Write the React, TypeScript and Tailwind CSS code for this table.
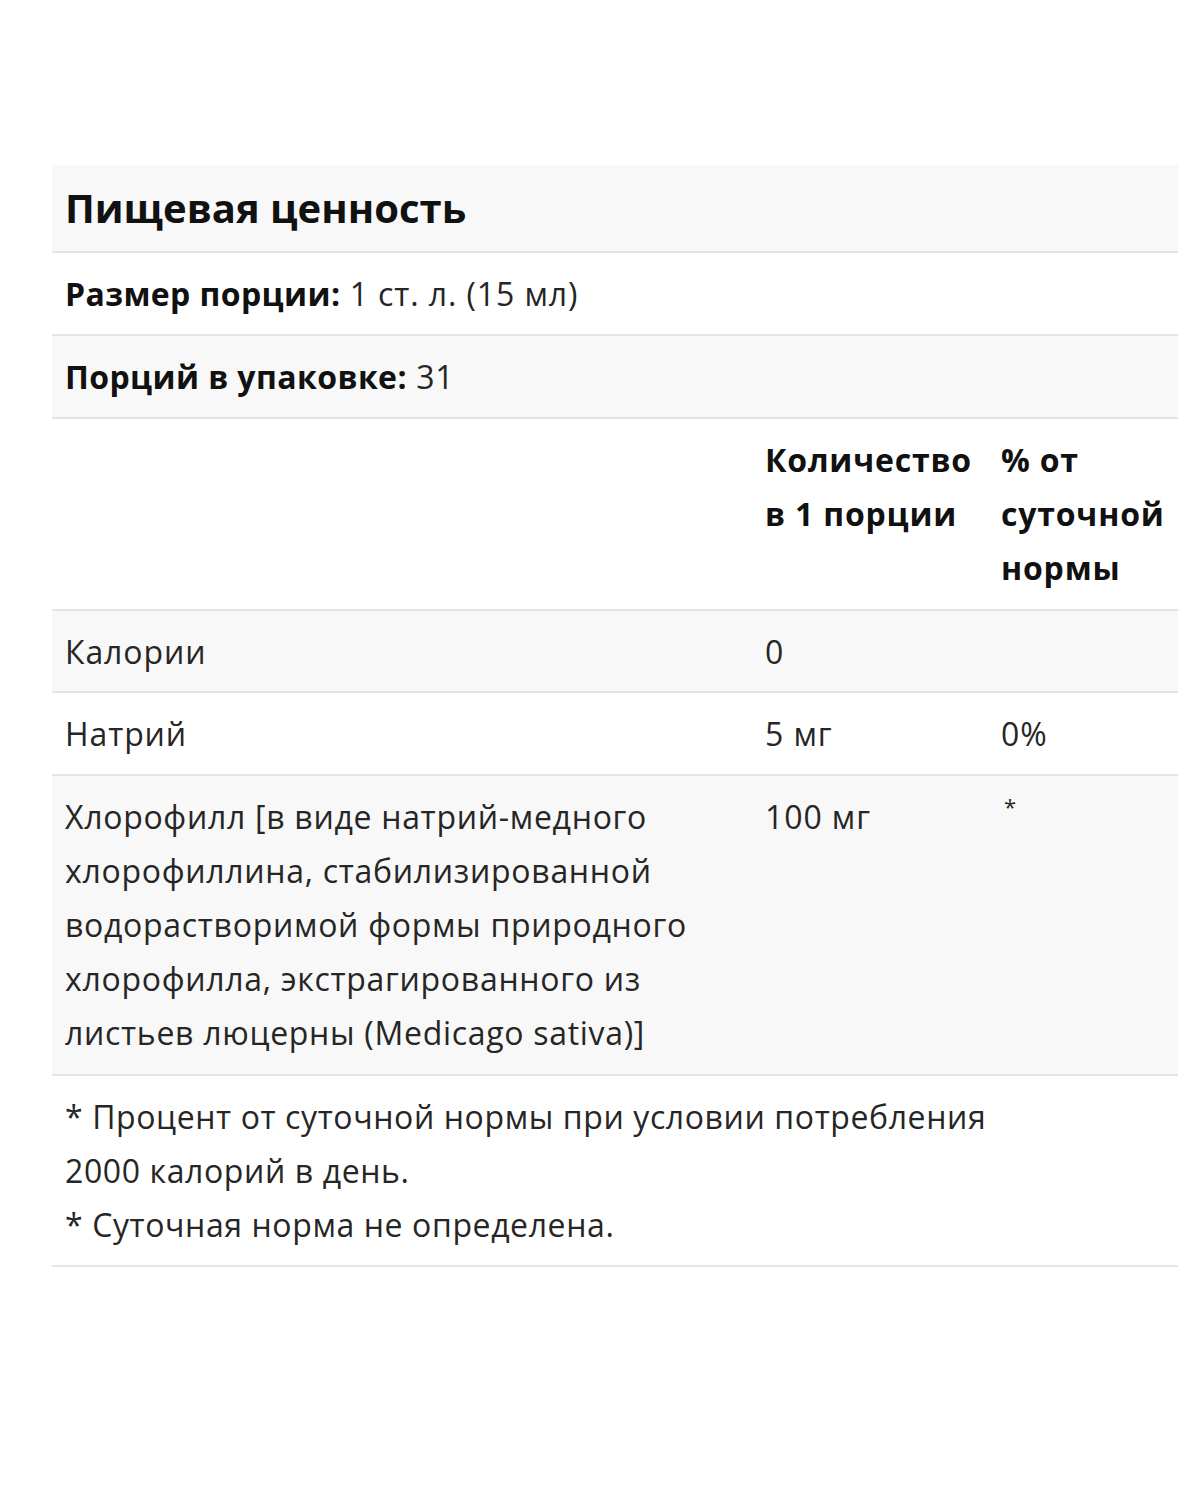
import React from "react";

const font = { fontFamily: "'Open Sans', 'Noto Sans', sans-serif" };

export default function App() {
  return (
    <div className="w-[1200px] h-[1500px] bg-white pt-[165px]" style={font}>
      <div className="ml-[52px] w-[1126px] text-[32px] leading-[54px] text-[#262626] tracking-[0.9px]">
        <div className="bg-[#f8f8f8] border-b-2 border-[#e5e5e5] px-[13px] pt-[14px] pb-[15px]">
          <div className="text-[40px] leading-[57px] font-bold text-[#111] tracking-normal">Пищевая ценность</div>
        </div>
        <div className="bg-white border-b-2 border-[#e5e5e5] px-[13px] pt-[14px] pb-[13px]">
          <span className="font-bold text-[#111] tracking-[0.4px]">Размер порции:</span> 1 ст. л. (15 мл)
        </div>
        <div className="bg-[#f8f8f8] border-b-2 border-[#e5e5e5] px-[13px] pt-[14px] pb-[13px]">
          <span className="font-bold text-[#111] tracking-[0.4px]">Порций в упаковке:</span> 31
        </div>
        <div className="grid grid-cols-[700px_236px_190px] bg-white border-b-2 border-[#e5e5e5] py-[14px] font-bold text-[#111] tracking-[0.8px]">
          <div />
          <div className="px-[13px]">Количество в 1 порции</div>
          <div className="px-[13px]">% от суточной нормы</div>
        </div>
        <div className="grid grid-cols-[700px_236px_190px] bg-[#f8f8f8] border-b-2 border-[#e5e5e5] pt-[14px] pb-[12px]">
          <div className="px-[13px]">Калории</div>
          <div className="px-[13px]">0</div>
          <div className="px-[13px]"></div>
        </div>
        <div className="grid grid-cols-[700px_236px_190px] bg-white border-b-2 border-[#e5e5e5] pt-[14px] pb-[13px]">
          <div className="px-[13px]">Натрий</div>
          <div className="px-[13px]">5 мг</div>
          <div className="px-[13px]">0%</div>
        </div>
        <div className="grid grid-cols-[700px_236px_190px] bg-[#f8f8f8] border-b-2 border-[#e5e5e5] py-[14px]">
          <div className="px-[13px] tracking-[0.7px]">
            Хлорофилл [в виде натрий-медного хлорофиллина, стабилизированной водорастворимой формы природного хлорофилла, экстрагированного из листьев люцерны (Medicago sativa)]
          </div>
          <div className="px-[13px]">100 мг</div>
          <div className="px-[13px]">
            <span className="inline-block text-[22px] leading-none align-[14px] ml-[3px]">*</span>
          </div>
        </div>
        <div className="bg-white border-b-2 border-[#e5e5e5] px-[13px] pt-[14px] pb-[13px] tracking-[0.6px]">
          <div className="w-[960px]">* Процент от суточной нормы при условии потребления 2000 калорий в день.</div>
          <div>* Суточная норма не определена.</div>
        </div>
      </div>
    </div>
  );
}
